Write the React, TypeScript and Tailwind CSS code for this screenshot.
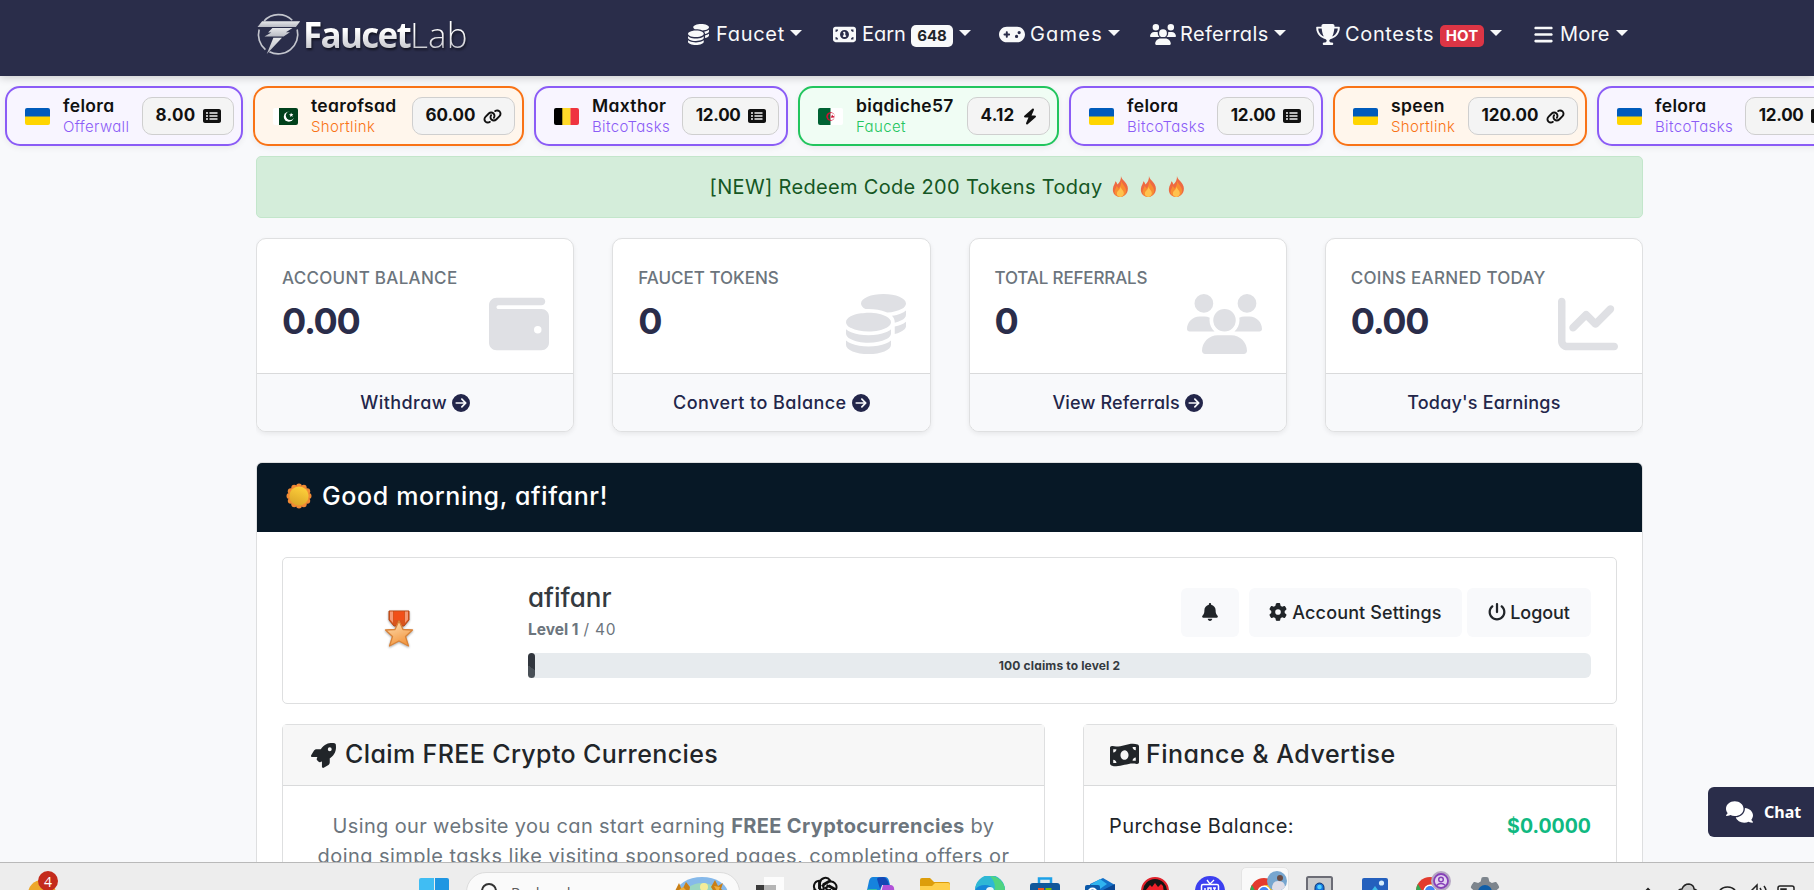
import type { ReactNode } from "react";
import type { IconType } from "react-icons";
import {
  FaBars,
  FaBell,
  FaBolt,
  FaChartLine,
  FaCircleArrowRight,
  FaCoins,
  FaComments,
  FaGamepad,
  FaGear,
  FaLink,
  FaMoneyBill1,
  FaMoneyBillWave,
  FaPowerOff,
  FaRectangleList,
  FaRocket,
  FaTrophy,
  FaUsers,
  FaWallet
} from "react-icons/fa6";

type NavEntry = {
  label: string;
  icon: IconType;
  iconClass: string;
  textClass: string;
  itemClass: string;
  badge?: string;
  badgeClass?: string;
};

const navItems: NavEntry[] = [
  { label: "Faucet", icon: FaCoins, iconClass: "w-[21px] h-[21px] mr-[7px]", textClass: "w-[68px] tracking-[0.7px]", itemClass: "mr-[31px]" },
  { label: "Earn", icon: FaMoneyBill1, iconClass: "w-[23px] h-[21px] mr-[6px]", textClass: "w-[43px] tracking-[0px]", itemClass: "mr-[28px]", badge: "648", badgeClass: "w-[42px] bg-[#f8f9fa] text-[#212529]" },
  { label: "Games", icon: FaGamepad, iconClass: "w-[26px] h-[21px] mr-[5px]", textClass: "w-[72px] tracking-[1.2px]", itemClass: "mr-[30px]" },
  { label: "Referrals", icon: FaUsers, iconClass: "w-[26px] h-[21px] mr-[4px]", textClass: "w-[88px] tracking-[0.35px]", itemClass: "mr-[30px]" },
  { label: "Contests", icon: FaTrophy, iconClass: "w-[24px] h-[21px] mr-[5px]", textClass: "w-[89px] tracking-[0.65px]", itemClass: "mr-[32px]", badge: "HOT", badgeClass: "w-[44px] bg-[#dc3545] text-white" },
  { label: "More", icon: FaBars, iconClass: "w-[19px] h-[21px] mr-[7px]", textClass: "w-[50px] tracking-[0.2px]", itemClass: "" }
];

type Country = "ua" | "pk" | "be" | "dz";

type Claim = {
  user: string;
  source: string;
  amount: string;
  amountClass: string;
  country: Country;
  icon: IconType;
  cardClass: string;
  sourceClass: string;
};

const violet = "border-[#8b5cf6] bg-[#f8f5ff]";
const orange = "border-[#f97316] bg-[#fff6ec]";
const green = "border-[#22c55e] bg-[#f0fdf4]";

const claims: Claim[] = [
  { user: "felora", source: "Offerwall", amount: "8.00", amountClass: "tracking-[0.3px]", country: "ua", icon: FaRectangleList, cardClass: `${violet} w-[238px]`, sourceClass: "text-[#8b5cf6]" },
  { user: "tearofsad", source: "Shortlink", amount: "60.00", amountClass: "tracking-[0px]", country: "pk", icon: FaLink, cardClass: `${orange} w-[271px]`, sourceClass: "text-[#f97316]" },
  { user: "Maxthor", source: "BitcoTasks", amount: "12.00", amountClass: "tracking-[-0.3px]", country: "be", icon: FaRectangleList, cardClass: `${violet} w-[254px]`, sourceClass: "text-[#8b5cf6]" },
  { user: "biqdiche57", source: "Faucet", amount: "4.12", amountClass: "tracking-[0.2px]", country: "dz", icon: FaBolt, cardClass: `${green} w-[261px]`, sourceClass: "text-[#22c55e]" },
  { user: "felora", source: "BitcoTasks", amount: "12.00", amountClass: "tracking-[-0.3px]", country: "ua", icon: FaRectangleList, cardClass: `${violet} w-[254px]`, sourceClass: "text-[#8b5cf6]" },
  { user: "speen", source: "Shortlink", amount: "120.00", amountClass: "tracking-[0px]", country: "ua", icon: FaLink, cardClass: `${orange} w-[254px]`, sourceClass: "text-[#f97316]" },
  { user: "felora", source: "BitcoTasks", amount: "12.00", amountClass: "tracking-[-0.3px]", country: "ua", icon: FaRectangleList, cardClass: `${violet} w-[254px]`, sourceClass: "text-[#8b5cf6]" }
];

const stats = [
  { label: "Account balance", labelClass: "tracking-[0.3px]", value: "0.00", action: "Withdraw", actionClass: "tracking-[0.45px]", arrow: true, icon: FaWallet, iconClass: "w-[60px]" },
  { label: "Faucet tokens", labelClass: "tracking-[0px]", value: "0", action: "Convert to Balance", actionClass: "tracking-[0.45px]", arrow: true, icon: FaCoins, iconClass: "w-[60px]" },
  { label: "Total referrals", labelClass: "tracking-[-0.15px]", value: "0", action: "View Referrals", actionClass: "tracking-[0.15px]", arrow: true, icon: FaUsers, iconClass: "w-[75px]" },
  { label: "Coins earned today", labelClass: "tracking-[0.3px]", value: "0.00", action: "Today's Earnings", actionClass: "tracking-[0.2px]", arrow: false, icon: FaChartLine, iconClass: "w-[60px]" }
];

function Logo() {
  return (
    <div className="flex h-[44px] items-center">
      <svg viewBox="48 36 138 130" className="h-[43px] w-[46px] shrink-0">
        <defs>
          <linearGradient id="steel" x1="0" y1="0" x2="0" y2="1">
            <stop offset="0" stopColor="#e6e7ea" />
            <stop offset="1" stopColor="#b9bbc4" />
          </linearGradient>
        </defs>
        <path d="M72 60A59 59 0 0 1 157 58" fill="none" stroke="#c3c5cd" strokeWidth="5" />
        <path d="M172 86A59 59 0 0 1 88 153" fill="none" stroke="#c3c5cd" strokeWidth="5" />
        <path d="M76 147A59 59 0 0 1 57 86" fill="none" stroke="#c3c5cd" strokeWidth="5" />
        <path d="M66 61H181L168 78H52Z" fill="url(#steel)" />
        <path d="M97 81H158L138 94H150L131 107H73L94 95H84Z" fill="url(#steel)" />
        <path d="M100 111H126L80 160Z" fill="url(#steel)" />
      </svg>
      <span className="ml-px mt-px bg-gradient-to-b from-white from-40% to-[#b9bac2] to-90% bg-clip-text font-['Open_Sans'] text-[35px] leading-[48px] text-transparent drop-shadow-[1px_2px_1px_rgba(0,0,0,0.55)]">
        <span className="font-bold tracking-[-1.7px]">Faucet</span>
        <span className="font-light tracking-[0.1px]">Lab</span>
      </span>
    </div>
  );
}

function Navbar() {
  return (
    <nav className="relative z-10 h-[76px] bg-[#2a2d4a] shadow-[0_2px_8px_rgba(0,0,0,0.18)]">
      <div className="ml-[256px] flex h-[68px] w-[1387px] items-center justify-between">
        <Logo />
        <div className="mr-[15px] flex items-center">
          {navItems.map(({ label, icon: Icon, iconClass, textClass, itemClass, badge, badgeClass }) => (
            <a key={label} className={`flex items-center text-[20px] text-[#f8f9fa] ${itemClass}`}>
              <Icon className={`shrink-0 ${iconClass}`} />
              <span className={`whitespace-nowrap ${textClass}`}>{label}</span>
              {badge && (
                <span className={`ml-[6px] mt-[4px] flex h-[22px] items-center justify-center rounded-[5px] text-[15px] font-bold ${badgeClass}`}>
                  {badge}
                </span>
              )}
              <span className="ml-[6px] -mt-[2px] border-x-[6px] border-t-[6px] border-x-transparent border-t-[#f8f9fa]" />
            </a>
          ))}
        </div>
      </div>
    </nav>
  );
}

function Flag({ country }: { country: Country }) {
  return (
    <svg viewBox="0 0 25 17" className="h-[17px] w-[25px] shrink-0 rounded-[2px]">
      {country === "ua" && (
        <>
          <rect width="25" height="9" fill="#005bbb" />
          <rect y="8.5" width="25" height="8.5" fill="#ffd500" />
        </>
      )}
      {country === "be" && (
        <>
          <rect width="9" height="17" fill="#000" />
          <rect x="8.3" width="8.4" height="17" fill="#ffd92a" />
          <rect x="16.5" width="8.5" height="17" fill="#ef3340" />
        </>
      )}
      {country === "pk" && (
        <>
          <rect width="25" height="17" fill="#fff" />
          <rect x="6" width="19" height="17" fill="#01411c" />
          <circle cx="15.8" cy="8.7" r="5" fill="#fff" />
          <circle cx="17.2" cy="7.6" r="4.4" fill="#01411c" />
          <path d="m18 4.6.7 1.5 1.6-.1-1.1 1.2.6 1.5-1.5-.7-1.2 1 .2-1.6-1.3-.8 1.6-.4z" fill="#fff" />
        </>
      )}
      {country === "dz" && (
        <>
          <rect width="25" height="17" fill="#fff" />
          <rect width="12.5" height="17" fill="#006233" />
          <circle cx="12.5" cy="8.5" r="4.2" fill="#d21034" />
          <path d="M12.500 5.200A3.400 3.400 0 0 0 12.500 11.800Z" fill="#006233" />
          <path d="M12.500 5.200A3.400 3.400 0 0 1 16.800 8.500A3.400 3.400 0 0 1 12.500 11.800Z" fill="#fff" />
          <path d="m14.600 6.400.5 1.500h1.600l-1.300 1 .5 1.500-1.300-.9-1.800.6.8-1.400-1.100-.9 1.600-.1z" fill="#d21034" />
        </>
      )}
    </svg>
  );
}

function ClaimTicker() {
  return (
    <div className="flex gap-[10px] overflow-hidden pb-[10px] pl-[5px] pt-[10px]">
      {claims.map(({ user, source, amount, amountClass, country, icon: Icon, cardClass, sourceClass }, i) => (
        <div key={i} className={`flex h-[60px] shrink-0 items-center rounded-[15px] border-2 pl-[18px] pr-[7px] shadow-[0_2px_6px_rgba(0,0,0,0.06)] ${cardClass}`}>
          <Flag country={country} />
          <div className="ml-[13px]">
            <p className="text-[17.5px] font-semibold leading-[21px] tracking-[0.35px] text-[#111]">{user}</p>
            <p className={`text-[15px] font-light leading-[22px] tracking-[0.35px] ${sourceClass}`}>{source}</p>
          </div>
          <div className="ml-auto flex h-[38px] items-center rounded-[10px] border border-[#cfcfcf] bg-[#f4f4f4] px-[12.5px] text-[17px] font-bold text-[#111]">
            <span className={`-mt-px ${amountClass}`}>{amount}</span>
            <Icon className={Icon === FaRectangleList ? "ml-[7px] h-[18px] w-[18px]" : Icon === FaBolt ? "ml-[8px] h-[17px] w-[14px]" : "ml-[7px] h-[19px] w-[19px]"} />
          </div>
        </div>
      ))}
    </div>
  );
}

function Flame() {
  return (
    <svg viewBox="0 0 18 22" className="h-[21px] w-[17px]">
      <path d="M9.500 0C10 4 15 6 16.500 11C18 17 14 22 8.800 22C3.500 22 .3 18 1 13C1.400 9.800 3.300 8.400 3.600 5.500C5 6.500 5.500 8 5.600 9C8 7 9.800 3.800 9.500 0Z" fill="#ee6a42" />
      <path d="M9.800 5C10.500 8.500 14.500 11 14.900 15C15.200 19 12 22 9 22C5 22 2.200 19 2.900 15.500C3.300 13.500 4.500 12.300 4.800 10.500C6.200 11.500 6.700 12.500 7 13.300C8.800 11.500 9.900 8.500 9.800 5Z" fill="#f98d31" />
      <path d="M9.200 11C9.500 14 12.700 15.500 12.500 18.300C12.300 20.700 10.400 22 8.700 22C6.500 22 4.900 20.600 5.200 18C5.600 15.500 8.700 14.500 9.200 11Z" fill="#ffc24e" />
    </svg>
  );
}

function StatCard({ label, labelClass, value, action, actionClass, arrow, icon: Icon, iconClass }: (typeof stats)[number]) {
  return (
    <div className="flex h-[194px] flex-col overflow-hidden rounded-[10px] border border-[#dfe0e1] bg-white shadow-[0_2px_5px_rgba(0,0,0,0.07)]">
      <div className="flex flex-1 justify-between border-b border-[#d9dadb] px-[25px]">
        <div className="pt-[26px]">
          <p className={`whitespace-nowrap text-[17px] font-medium uppercase leading-[27px] text-[#6c757d] ${labelClass}`}>{label}</p>
          <p className="mt-[6px] text-[36px] font-bold leading-[46px] tracking-[-1.3px] text-[#2a2d4a]">{value}</p>
        </div>
        <Icon className={`-ml-[40px] -mr-px mt-[55px] h-[60px] shrink-0 text-[#dfe0e4] ${iconClass}`} />
      </div>
      <div className="flex h-[57px] items-center justify-center gap-[5px] bg-[#f8f9fb] text-[18px] font-medium text-[#23264a]">
        <span className={`-mt-px ${actionClass}`}>{action}</span>
        {arrow && <FaCircleArrowRight className="h-[18px] w-[18px]" />}
      </div>
    </div>
  );
}

function Sun() {
  const petals = Array.from({ length: 12 }, (_, i) => (i * Math.PI) / 6);
  return (
    <svg viewBox="0 0 26 26" className="-mt-[3px] h-[26px] w-[26px]">
      <defs>
        <linearGradient id="sun" x1="0.7" y1="0" x2="0.3" y2="1">
          <stop offset="0" stopColor="#ffd13b" />
          <stop offset="1" stopColor="#dba528" />
        </linearGradient>
      </defs>
      {petals.map((a) => (
        <circle key={a} cx={13 + 9.6 * Math.sin(a)} cy={13 - 9.6 * Math.cos(a)} r="2.900" fill="#f18a34" />
      ))}
      <circle cx="13" cy="13" r="10.500" fill="#f18a34" />
      <circle cx="13" cy="13" r="9.600" fill="url(#sun)" />
    </svg>
  );
}

function Medal() {
  return (
    <svg viewBox="0 0 30 38" className="-mt-[4px] h-[38px] w-[30px] drop-shadow-[0_1px_1px_rgba(0,0,0,0.35)]">
      <defs>
        <linearGradient id="medal" x1="0" y1="0" x2="0.4" y2="1">
          <stop offset="0" stopColor="#ffe2b8" />
          <stop offset="1" stopColor="#f39a45" />
        </linearGradient>
      </defs>
      <path d="M5 1H25V10L20 16H10L5 10Z" fill="#d9551d" stroke="#b54816" />
      <path d="M6 1.500H9V13L6 9.500ZM21 1.500H24V9.500L21 13Z" fill="#f49a76" />
      <path d="M10 1.500H20V10H10Z" fill="#f1501a" />
      <path d="M15 11L19 19.500L28.500 20L21.500 26.500L24.500 36L15 31L5.500 36L8.500 26.500L1.500 20L11 19.500Z" fill="url(#medal)" stroke="#d98339" strokeWidth="1.300" strokeLinejoin="round" />
    </svg>
  );
}

function ProfileCard() {
  const button = "flex h-[49px] items-center justify-center rounded-[6px] bg-[#f8f9fb] pb-px text-[18px] font-medium text-[#212529]";
  return (
    <div className="flex h-[147px] rounded-[5px] border border-[#dedfe0]">
      <div className="flex w-[245px] items-center pl-[101px]">
        <Medal />
      </div>
      <div className="mr-[25px] flex-1 pt-[20px]">
        <div className="flex h-[75px] justify-between">
          <div>
            <p className="pt-px text-[26px] font-medium leading-[38px] text-[#343a40]">afifanr</p>
            <p className="text-[15.5px] leading-[26px] text-[#6c757d]">
              <b>Level 1</b>
              <span className="tracking-[0.7px]"> / 40</span>
            </p>
          </div>
          <div className="flex pt-[10px]">
            <span className={`${button} mr-[10px] w-[58px]`}>
              <FaBell className="h-[18px] w-[16px]" />
            </span>
            <span className={`${button} mr-[5px] w-[213px] gap-[5px] tracking-[0.15px]`}>
              <FaGear className="h-[18px] w-[18px]" />
              Account Settings
            </span>
            <span className={`${button} w-[124px] gap-[4px] tracking-[-0.1px]`}>
              <FaPowerOff className="h-[18px] w-[18px]" />
              Logout
            </span>
          </div>
        </div>
        <div className="flex h-[25px] items-center justify-center rounded-[6px] bg-[#e7ebee]">
          <span className="h-full w-[7px] shrink-0 rounded-[4px] bg-[linear-gradient(35deg,#495057_0%,#495057_42%,#31363e_43%,#31363e_100%)]" />
          <span className="flex-1 pr-[7px] text-center text-[12px] font-bold tracking-[0.15px] text-[#343a40]">100 claims to level 2</span>
        </div>
      </div>
    </div>
  );
}

function Panel({ icon, title, titleClass, className, children }: { icon: ReactNode; title: string; titleClass: string; className: string; children: ReactNode }) {
  return (
    <div className={`h-[200px] rounded-t-[5px] border border-[#dedfe0] ${className}`}>
      <div className="flex h-[61px] items-center border-b border-[#d9dadb] bg-[#f7f7f7] text-[25px] font-medium text-[#212529]">
        {icon}
        <span className={`whitespace-nowrap ${titleClass}`}>{title}</span>
      </div>
      {children}
    </div>
  );
}

function Chrome() {
  return (
    <svg viewBox="0 0 28 28" className="mt-[10px] h-[28px] w-[28px]">
      <circle cx="14" cy="14" r="14" fill="#e33b2e" />
      <path d="M1.900 7A14 14 0 0 0 14 28L20 17.500L8 17.500Z" fill="#34a853" />
      <path d="M14 28A14 14 0 0 0 26 7H14L20 17.500Z" fill="#fbc116" />
      <circle cx="14" cy="14" r="6.500" fill="#fff" />
      <circle cx="14" cy="14" r="5" fill="#4285f4" />
    </svg>
  );
}

const taskIcons: { name: string; art: ReactNode }[] = [
  {
    name: "task-view",
    art: (
      <svg viewBox="0 0 28 28" className="mt-[10px] h-[28px] w-[28px]">
        <rect y="8" width="20" height="20" fill="#3b3b3b" />
        <rect x="8" width="20" height="20" fill="#fcfcfc" />
        <rect x="8" y="8" width="12" height="12" fill="#b5b5b5" />
      </svg>
    )
  },
  {
    name: "chatgpt",
    art: (
      <svg viewBox="0 0 28 28" className="mt-[9px] h-[28px] w-[28px]" fill="none" stroke="#111" strokeWidth="2">
        {[0, 60, 120, 180, 240, 300].map((r) => (
          <path key={r} transform={`rotate(${r} 14 14)`} d="M9 15V6.500A5.500 5.500 0 0 1 19 4.300L12.500 8V14" />
        ))}
      </svg>
    )
  },
  {
    name: "copilot",
    art: (
      <svg viewBox="0 0 30 28" className="mt-[10px] h-[28px] w-[30px]">
        <path d="M8 0H20Q23 0 24 4L25 8H17L12 24H5Q0 24 1 18L4 4Q5 0 8 0Z" fill="#1683dd" />
        <path d="M18 0Q22 0 24 8H17L15 12L12 2Q12 0 18 0Z" fill="#1447b5" />
        <path d="M18 8H26Q30 9 29 14L25 28H13Z" fill="#b252d8" />
        <path d="M3 12H12L9 24H4Q0 22 1 18Z" fill="#35bfa5" />
      </svg>
    )
  },
  {
    name: "explorer",
    art: (
      <svg viewBox="0 0 30 26" className="mt-[11px] h-[26px] w-[30px]">
        <path d="M0 2Q0 0 2 0H10L14 4H28Q30 4 30 6V12H0Z" fill="#dd9d0b" />
        <path d="M0 8H12L15 5H28Q30 5 30 7V26H0Z" fill="#ffcf4b" />
      </svg>
    )
  },
  {
    name: "edge",
    art: (
      <svg viewBox="0 0 30 30" className="mt-[9px] h-[30px] w-[30px]">
        <circle cx="15" cy="15" r="15" fill="#1687d8" />
        <path d="M0 14A15 15 0 0 1 30 14Q30 20 23 20Q18 20 19 15Q17 9 10 9Q3 9 0 14Z" fill="#2fb8d5" />
        <path d="M15 0A15 15 0 0 1 30 14Q30 20 23 20Q18 20 19 15Q22 8 15 0Z" fill="#4fd480" />
        <circle cx="15" cy="15" r="4" fill="#e9f4fa" />
      </svg>
    )
  },
  {
    name: "store",
    art: (
      <svg viewBox="0 0 30 28" className="mt-[10px] h-[28px] w-[30px]">
        <path d="M9 8V1.500H21V8" fill="none" stroke="#1da1e8" strokeWidth="2.500" />
        <rect y="6" width="30" height="22" rx="3" fill="#11589b" />
        <rect x="8" y="11" width="6" height="6" fill="#f25022" />
        <rect x="15.500" y="11" width="6" height="6" fill="#7fba00" />
      </svg>
    )
  },
  {
    name: "outlook",
    art: (
      <svg viewBox="0 0 30 28" className="mt-[11px] h-[28px] w-[30px]">
        <path d="M5 6L18 0L30 7V28H5Z" fill="#1371c8" />
        <path d="M5 7L15 1L22 6L12 13Z" fill="#2fb4ef" />
        <path d="M18 12L30 6V20H18Z" fill="#0a4693" />
        <rect y="7" width="15" height="16" rx="2" fill="#0c59a9" />
        <circle cx="7.500" cy="14.500" r="4" fill="none" stroke="#fff" strokeWidth="2" />
      </svg>
    )
  },
  {
    name: "red-app",
    art: (
      <svg viewBox="0 0 28 28" className="mt-[10px] h-[28px] w-[28px]">
        <circle cx="14" cy="14" r="13" fill="#141414" stroke="#e0222c" strokeWidth="2" />
        <path d="M5 13L9 8L11 10L14 6L17 10L20 7L22 9L23 16H5Z" fill="#ee2029" />
      </svg>
    )
  },
  {
    name: "iptv",
    art: (
      <svg viewBox="0 0 30 30" className="mt-[9px] h-[30px] w-[30px]">
        <circle cx="15" cy="15" r="15" fill="#3c3ff0" />
        <path d="M12 4L15 8L19 4" fill="none" stroke="#fff" strokeWidth="1.300" />
        <rect x="6.500" y="8.500" width="17" height="13" rx="1.500" fill="none" stroke="#fff" strokeWidth="1.500" />
        <path d="M10 12V18M13 18V12H16V15H13M18 12H21M19.500 12V18" fill="none" stroke="#fff" strokeWidth="1.500" />
      </svg>
    )
  },
  {
    name: "chrome-profile",
    art: (
      <div className="relative flex h-[40px] w-[48px] justify-center rounded-t-[5px] border border-[#e4e4e4] bg-[#f9f9f9] pr-[2px]">
        <Chrome />
        <svg viewBox="0 0 20 20" className="absolute left-[25px] top-[3px] h-[20px] w-[20px]">
          <circle cx="10" cy="10" r="10" fill="#77a6cf" />
          <circle cx="13" cy="7" r="3" fill="#6b4c44" />
          <path d="M5 18Q5 10 11 10Q18 10 18 16Q14 20 10 20Q7 20 5 18Z" fill="#dfdde7" />
        </svg>
      </div>
    )
  },
  {
    name: "device",
    art: (
      <svg viewBox="0 0 27 28" className="mt-[9px] h-[28px] w-[27px]">
        <rect x="1" y="1" width="25" height="30" rx="1.500" fill="#c9cacc" stroke="#6b6c75" strokeWidth="2" />
        <rect x="9" y="7" width="9" height="16" rx="4.500" fill="#1474dc" stroke="#10356e" />
        <circle cx="13.500" cy="11" r="2.300" fill="#4fd0ff" />
      </svg>
    )
  },
  {
    name: "photos",
    art: (
      <svg viewBox="0 0 26 26" className="mt-[11px] h-[26px] w-[26px]">
        <rect width="26" height="26" rx="2" fill="#2460bd" />
        <circle cx="19.500" cy="5" r="2.600" fill="#d4ecfb" />
        <path d="M0 26L13 8L26 26Z" fill="#3dbbe8" />
      </svg>
    )
  },
  {
    name: "chrome-second",
    art: (
      <div className="relative">
        <Chrome />
        <svg viewBox="0 0 20 20" className="absolute left-[15px] top-[4px] h-[20px] w-[20px]">
          <circle cx="10" cy="10" r="10" fill="#b7a8c4" />
          <circle cx="10" cy="10" r="7" fill="#e4d4f2" stroke="#8640b8" strokeWidth="1.800" />
          <circle cx="10" cy="8.500" r="2.300" fill="none" stroke="#8640b8" strokeWidth="1.500" />
          <path d="M5.500 14.500Q10 10.500 14.500 14.500" fill="none" stroke="#8640b8" strokeWidth="1.500" />
        </svg>
      </div>
    )
  },
  {
    name: "settings",
    art: (
      <span className="relative">
        <FaGear className="mt-[10px] h-[30px] w-[30px] text-[#7d858d]" />
        <span className="absolute left-[8px] top-[18px] h-[14px] w-[14px] rounded-full bg-[#0f5ea8]" />
      </span>
    )
  }
];

function Taskbar() {
  return (
    <div className="flex h-[28px] items-start overflow-hidden border-t border-[#b9b9b9] bg-[#ededed]">
      <div className="relative ml-[28px] mt-[17px] h-[28px] w-[28px] shrink-0 rounded-full bg-[#eda72a]">
        <span className="absolute -top-[9px] left-[10px] grid h-[20px] w-[20px] place-items-center rounded-full bg-[#c42b1c] font-['Open_Sans'] text-[14px] text-white">4</span>
      </div>
      <div className="ml-[363px] mt-[15px] grid h-[30px] w-[30px] shrink-0 grid-cols-2 gap-[1px]">
        <span className="rounded-tl-[2px] bg-[#40bdf3]" />
        <span className="rounded-tr-[2px] bg-[#1f96e2]" />
        <span className="bg-[#1f96e2]" />
        <span className="bg-[#0a73cd]" />
      </div>
      <div className="ml-[17px] mt-[9px] flex h-[40px] w-[274px] shrink-0 rounded-full border border-[#dcdcdc] bg-[#fafafa]">
        <svg viewBox="0 0 20 20" className="ml-[12px] mt-[10px] h-[20px] w-[20px]" fill="none" stroke="#333" strokeWidth="2">
          <circle cx="10" cy="8" r="7" />
          <path d="m5 13-4 5" />
        </svg>
        <span className="ml-[12px] mt-[7px] font-['Open_Sans'] text-[15px] leading-[24px] text-[#5d5d5d]">Rechercher</span>
        <svg viewBox="0 0 58 34" className="ml-auto mr-[8px] mt-[4px] h-[34px] w-[58px]">
          <ellipse cx="29" cy="17" rx="26" ry="17" fill="#86b9ea" />
          <ellipse cx="29" cy="19" rx="18" ry="13" fill="#9bd6c0" />
          <circle cx="31" cy="10" r="4" fill="#f4ec9a" />
          <path d="M2 14L6 6L9 13L13 5L17 10L15 22H5ZM38 10L42 3L45 9L50 6L48 12L53 15L44 20Z" fill="#c97f16" />
          <path d="M6 13L10 10L14 14L11 22ZM41 9L47 10L45 16Z" fill="#efae3b" />
        </svg>
      </div>
      <div className="ml-[2px] flex">
        {taskIcons.map(({ name, art }) => (
          <div key={name} className="flex w-[55px] shrink-0 justify-center pt-[4px]">
            {art}
          </div>
        ))}
      </div>
      <svg viewBox="0 0 160 28" className="ml-[128px] h-[28px] w-[160px]" fill="none" stroke="#222" strokeWidth="1.500">
        <path d="M4 30L8 26L12 30" strokeWidth="2" />
        <path d="M38 30Q38 26 42 26Q44 21 49 21Q54 22 54 26Q58 27 58 31" fill="#c9c9c9" />
        <path d="M78 31A10 10 0 0 1 97 31M83 31A5 5 0 0 1 92 31" />
        <path d="M108 28H111L117 22V32M120 25Q122 28 121 32M124 23Q127 27 126 32" />
        <rect x="138" y="23" width="16" height="12" rx="2" />
        <path d="M141 26H146V31H141Z" fill="#222" />
      </svg>
    </div>
  );
}

export default function App() {
  return (
    <div className="relative flex h-[890px] w-[1814px] flex-col overflow-hidden bg-[#f8f9fb] font-['Inter',sans-serif] [font-feature-settings:'cv11']">
      <Navbar />
      <ClaimTicker />
      <main className="ml-[256px] min-h-0 w-[1387px] flex-1 overflow-hidden">
        <div className="flex h-[62px] items-center justify-center rounded-[5px] border border-[#c3e6cb] bg-[#d4edda] pr-[4px] text-[20px] text-[#155724]">
          <span className="tracking-[0.33px]">[NEW] Redeem Code 200 Tokens Today</span>
          <span className="-mt-px ml-[10px] flex gap-[11px]">
            <Flame />
            <Flame />
            <Flame />
          </span>
        </div>
        <section className="mt-[20px] grid grid-cols-4 gap-[38px]">
          {stats.map((stat) => (
            <StatCard key={stat.label} {...stat} />
          ))}
        </section>
        <section className="mt-[30px] h-[480px] overflow-hidden rounded-t-[6px] border border-[#dedfe0] bg-white">
          <div className="flex h-[69px] items-center bg-[#071826] pl-[29px] text-[25px] font-medium text-white">
            <Sun />
            <span className="ml-[10px] -mt-[2px] tracking-[0.63px]">Good morning, afifanr!</span>
          </div>
          <div className="px-[25px] pt-[25px]">
            <ProfileCard />
            <div className="mt-[20px] flex justify-between">
              <Panel className="w-[763px]" title="Claim FREE Crypto Currencies" titleClass="tracking-[0.38px]" icon={<FaRocket className="ml-[28px] mr-[9px] h-[25px] w-[25px]" />}>
                <p className="whitespace-nowrap pt-[25px] text-center text-[20px] leading-[30px] text-[#6c757d]">
                  <span className="tracking-[0.35px]">
                    Using our website you can start earning <b>FREE Cryptocurrencies</b> by
                  </span>
                  <br />
                  <span className="tracking-[0.46px]">doing simple tasks like visiting sponsored pages, completing offers or</span>
                </p>
              </Panel>
              <Panel className="w-[534px]" title="Finance & Advertise" titleClass="tracking-[0.5px]" icon={<FaMoneyBillWave className="ml-[26px] mr-[7px] h-[26px] w-[29px]" />}>
                <div className="flex justify-between px-[25px] pt-[25px] text-[20px] leading-[30px] text-[#212529]">
                  <span className="tracking-[0.4px]">Purchase Balance:</span>
                  <b className="text-[19.5px] text-[#10b981]">$0.0000</b>
                </div>
              </Panel>
            </div>
          </div>
        </section>
      </main>
      <div className="absolute right-0 top-[787px] flex h-[50px] w-[106px] items-center rounded-l-[6px] bg-[#2a2d4a] pl-[18px] text-white">
        <FaComments className="h-[24px] w-[27px]" />
        <span className="ml-[11px] font-['Noto_Sans'] text-[16px] font-bold">Chat</span>
      </div>
      <Taskbar />
    </div>
  );
}
